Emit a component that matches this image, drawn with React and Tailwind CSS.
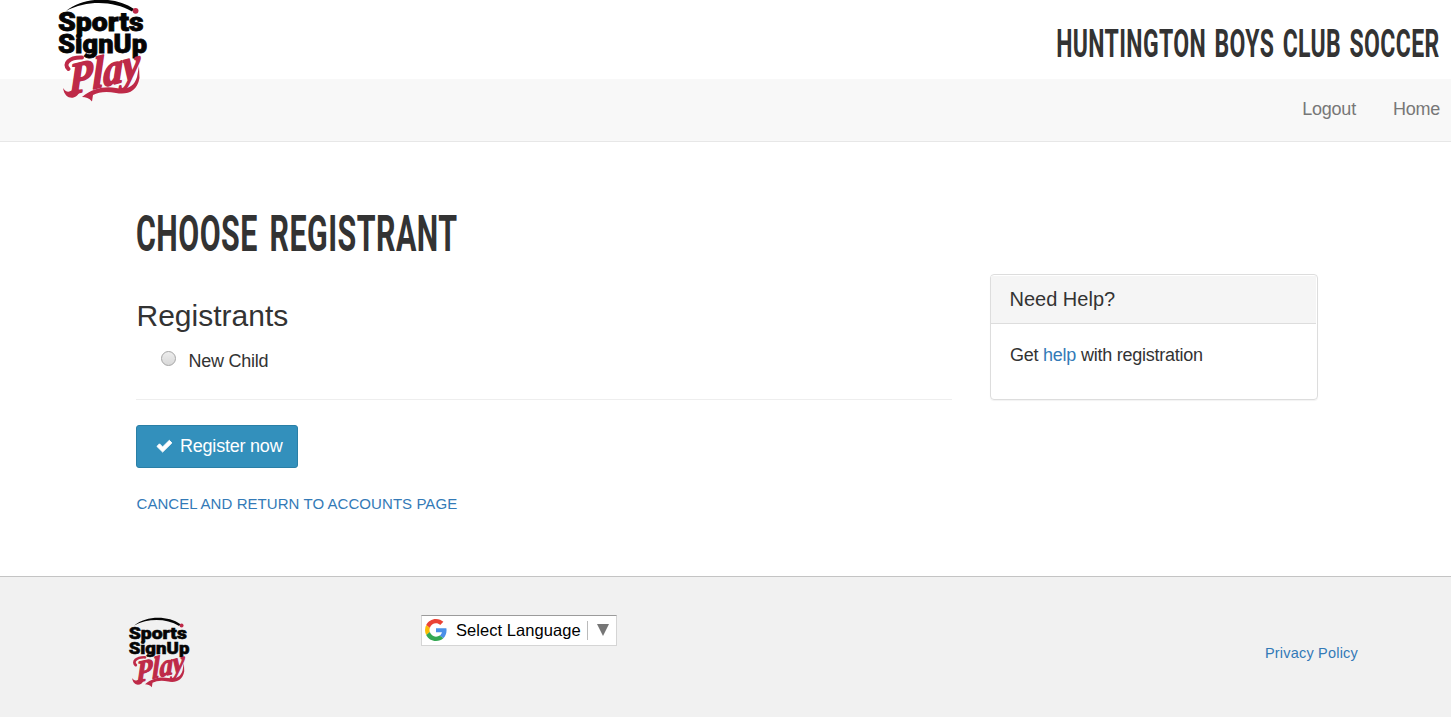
import React from "react";

function Logo({ className }) {
  return (
    <svg viewBox="56 -3 93 107" className={className} role="img">
      <path d="M66 11 C84 -3.5 115 -4 134 9 L132 11.5 C113 0.5 87 0 66 11 Z" fill="#050505" />
      <circle cx="135.6" cy="10.8" r="2.9" fill="#be2a48" />
      <g fill="#050505" stroke="#050505" strokeWidth="0.8" fontFamily="Roboto, sans-serif" fontWeight="900">
        <text x="58" y="30.8" fontSize="25" textLength="85.5" lengthAdjust="spacingAndGlyphs">Sports</text>
        <text x="58" y="52.6" fontSize="25" textLength="89" lengthAdjust="spacingAndGlyphs">SignUp</text>
      </g>
      <g transform="translate(69 95) skewY(-14)">
        <text
          x="0" y="0" fontSize="45" fontFamily="'Liberation Serif', serif" fontWeight="700" fontStyle="italic"
          fill="#be2a48" stroke="#be2a48" strokeWidth="1.8" strokeLinejoin="round" textLength="71" lengthAdjust="spacingAndGlyphs"
        >Play</text>
      </g>
      <path d="M68.5 69 C63 64 69 57 82 57.5" fill="none" stroke="#be2a48" strokeWidth="4" strokeLinecap="round" />
      <path d="M63 88 C66 93 71 93 75 87 L80 91 C77 100 65 101 63 88 Z" fill="#be2a48" />
      <path d="M82 97 C93 88 105 86 116 88 C127 90 134 87 137 77 L139 66 L139.5 78 C137 92 127 95 116 93 C106 91 99 92 93 95 L92 101.5 C89 98 86 97 82 97 Z" fill="#be2a48" />
    </svg>
  );
}

function GoogleG() {
  return (
    <svg viewBox="0 0 48 48" className="mb-px size-[22px] shrink-0">
      <path fill="#ea4335" d="M24 9.5c3.54 0 6.71 1.22 9.21 3.6l6.85-6.85C35.9 2.38 30.47 0 24 0 14.62 0 6.51 5.38 2.56 13.22l7.98 6.19C12.43 13.72 17.74 9.5 24 9.5z" />
      <path fill="#4a90e8" d="M46.98 24.55c0-1.57-.15-3.09-.38-4.55H24v9.02h12.94c-.58 2.96-2.26 5.48-4.78 7.18l7.73 6c4.51-4.18 7.09-10.36 7.09-17.65z" />
      <path fill="#fbbc05" d="M10.53 28.59A14.5 14.5 0 0 1 9.77 24c0-1.6.27-3.14.76-4.59l-7.98-6.19A23.9 23.9 0 0 0 0 24c0 3.88.92 7.54 2.56 10.78l7.97-6.19z" />
      <path fill="#34a853" d="M24 48c6.48 0 11.93-2.13 15.89-5.81l-7.73-6c-2.15 1.45-4.92 2.3-8.16 2.3-6.26 0-11.57-4.22-13.47-9.91l-7.98 6.19C6.51 42.62 14.62 48 24 48z" />
    </svg>
  );
}

export default function App() {
  return (
    <div className="flex h-[717px] flex-col overflow-hidden bg-white font-['Liberation_Sans',Arial,sans-serif] text-[18px] leading-[26px] text-[#333]">
      <header className="relative shrink-0">
        <div className="flex h-[79px] justify-end pt-[19px] pr-[11px]">
          <h2 className="origin-right scale-x-[0.605] font-['Roboto',sans-serif] text-[38px] leading-[51px] font-bold tracking-[0.6px] [word-spacing:4px] whitespace-nowrap">
            HUNTINGTON BOYS CLUB SOCCER
          </h2>
        </div>
        <nav className="flex h-[63px] justify-end gap-[37px] border-b border-[#e7e7e7] bg-[#f8f8f8] pt-[17px] pr-[11px] text-[#777]">
          <a className="tracking-[-0.2px]">Logout</a>
          <a className="tracking-[-0.25px]">Home</a>
        </nav>
        <Logo className="absolute top-[-3px] left-[56px] h-[107px] w-[93px] overflow-visible" />
      </header>

      <main className="flex h-[434px] shrink-0 pl-[136px]">
        <section className="w-[816px]">
          <h1 className="mt-[62px] w-[320px] origin-left scale-x-[0.607] font-['Roboto',sans-serif] text-[50px] leading-[60px] font-bold tracking-[0.8px] [word-spacing:6px] whitespace-nowrap">
            CHOOSE REGISTRANT
          </h1>
          <h3 className="mt-[32px] pt-px pl-[0.5px] text-[30px] leading-[38px]">Registrants</h3>
          <label className="mt-[13px] flex pl-[25px] tracking-[-0.25px]">
            <span className="mt-[3px] mr-[12.5px] size-[15px] rounded-full border border-[#a5a5a5] bg-linear-to-b from-[#ededed] to-[#d9d9d9]" />
            New Child
          </label>
          <hr className="mt-[25px] border-[#eee]" />
          <button className="mt-[25px] flex h-[43px] w-[162px] items-center rounded-[3px] border border-[#2a7fa6] bg-[#3390bc] pb-[2px] pl-[19px] text-white">
            <svg viewBox="0 0 18 14" className="mr-[7px] h-[14px] w-[17px]">
              <path d="M1 7.4 3.7 4.7 7 8 14.1 1 16.8 3.7 7 13.4Z" fill="currentColor" stroke="currentColor" strokeWidth="1" strokeLinejoin="round" />
            </svg>
            <span className="tracking-[-0.22px]">Register now</span>
          </button>
          <a className="mt-[23px] block pl-[0.5px] text-[15px] tracking-[0.06px] text-[#337ab7]">CANCEL AND RETURN TO ACCOUNTS PAGE</a>
        </section>
        <aside className="mt-[132px] ml-[38px] h-[126px] w-[328px] rounded-[4px] border border-[#ddd] pt-px pr-px shadow-[0_1px_1px_rgba(0,0,0,0.05)]">
          <h4 className="h-[48px] border-b border-[#ddd] bg-[#f5f5f5] pt-[10px] pl-[18.5px] text-[20px]">Need Help?</h4>
          <p className="pt-[18px] pl-[19px] tracking-[-0.24px]">
            Get <a className="text-[#337ab7]">help</a> with registration
          </p>
        </aside>
      </main>

      <footer className="flex h-[141px] shrink-0 border-t border-[#c4c4c4] bg-[#f1f1f1] pl-[127px]">
        <Logo className="mt-[39px] h-[73px] w-[64px] overflow-visible" />
        <div className="mt-[38px] ml-[230px] flex h-[31px] w-[196px] items-center border border-t-[#9b9b9b] border-r-[#d5d5d5] border-b-[#d5d5d5] border-l-[#d5d5d5] bg-white pl-[3px] text-[16.5px] text-black">
          <GoogleG />
          <span className="mb-[2px] ml-[9px] tracking-[0.05px]">Select Language</span>
          <span className="ml-[6px] h-[19px] border-l border-[#bbb]" />
          <svg viewBox="0 0 14 12" className="mb-[2px] ml-[8px] h-[12px] w-[14px]">
            <path d="M1 0H13L7 12Z" fill="#767676" />
          </svg>
        </div>
        <a className="mt-[63px] mr-[93px] ml-auto text-[14.5px] tracking-[0.2px] text-[#337ab7]">Privacy Policy</a>
      </footer>
    </div>
  );
}
